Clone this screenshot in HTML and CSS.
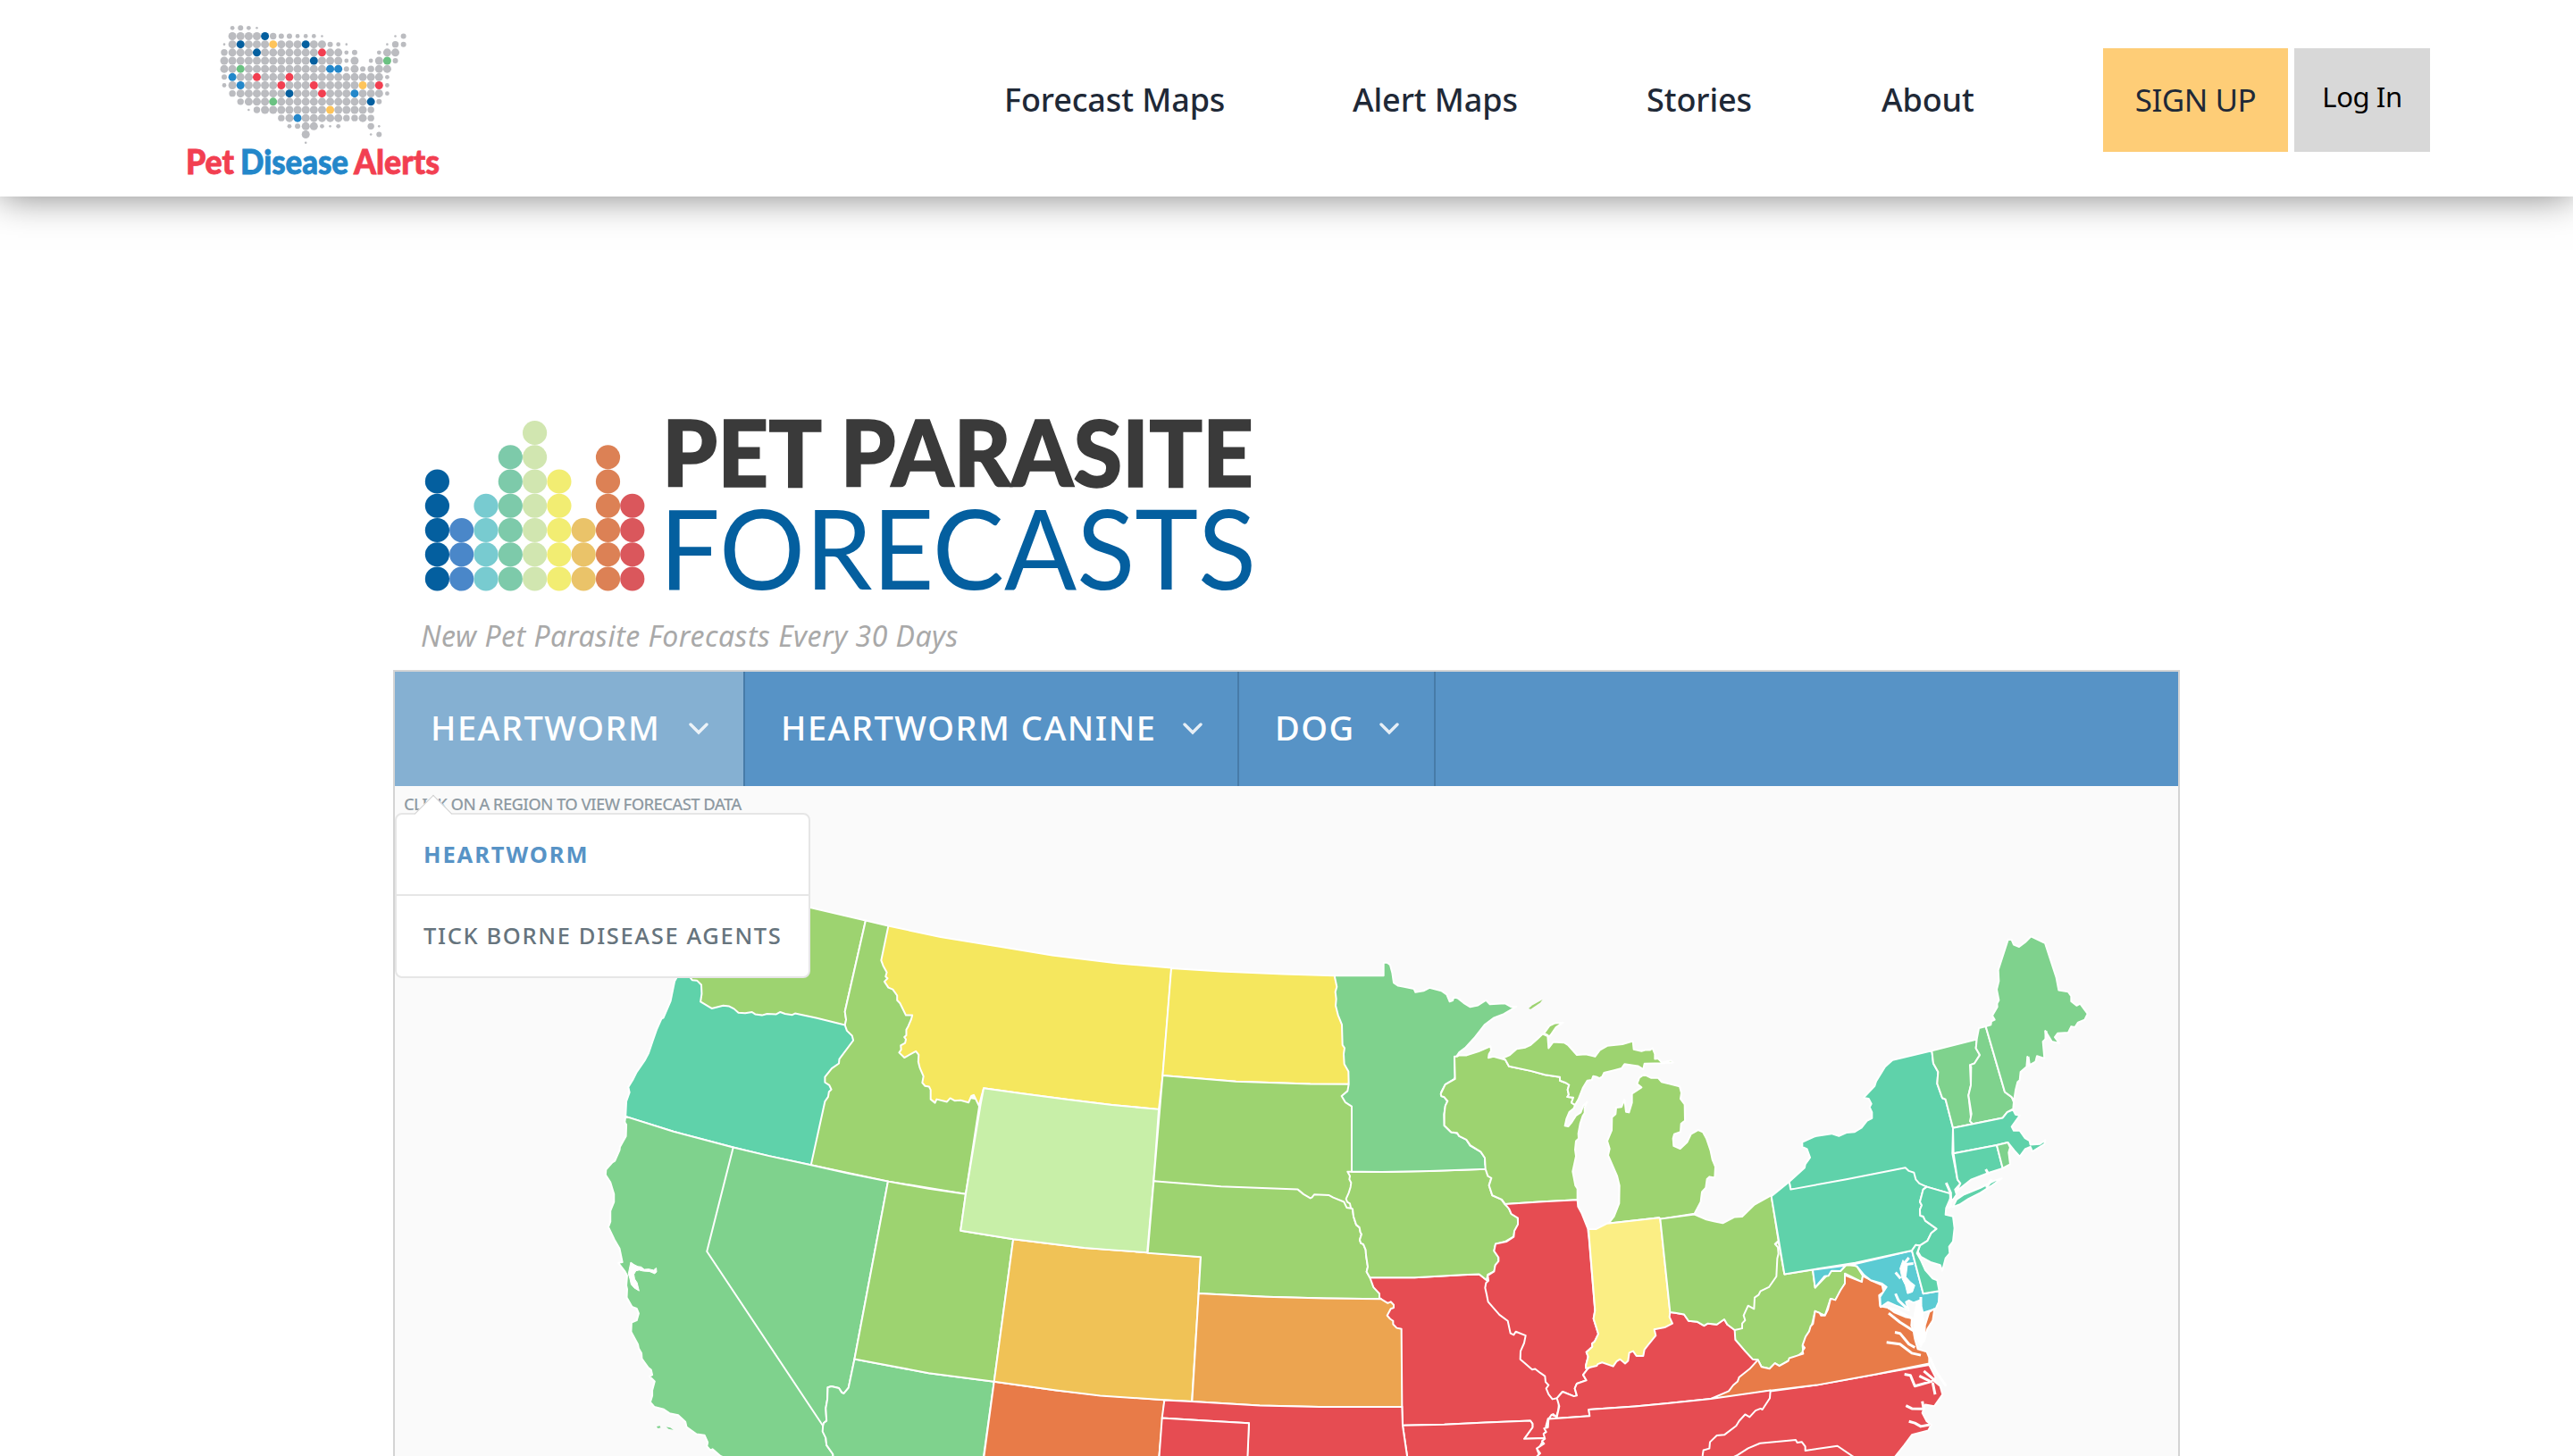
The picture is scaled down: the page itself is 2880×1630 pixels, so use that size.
FILE: index.html
```html
<!DOCTYPE html>
<html lang="en">
<head>
<meta charset="utf-8">
<title>Pet Disease Alerts</title>
<link rel="stylesheet" href="styles.css">
</head>
<body>
<header class="site-header">
  <a class="brand">
    <svg class="brand-logo" viewBox="190 10 320 200" width="320" height="200">
      <g id="usa-dots"></g>
      <g class="brand-name">
        <text x="208" y="195" textLength="54" lengthAdjust="spacingAndGlyphs" class="red">Pet</text>
        <text x="269" y="195" textLength="121" lengthAdjust="spacingAndGlyphs" class="blue">Disease</text>
        <text x="396" y="195" textLength="96" lengthAdjust="spacingAndGlyphs" class="red">Alerts</text>
      </g>
    </svg>
  </a>
  <nav class="main-nav">
    <a class="nav-link forecast">Forecast Maps</a>
    <a class="nav-link alert">Alert Maps</a>
    <a class="nav-link stories">Stories</a>
    <a class="nav-link about">About</a>
    <a class="btn signup">SIGN UP</a>
    <a class="btn login">Log In</a>
  </nav>
</header>

<main class="content">
  <svg class="forecast-logo" viewBox="470 430 960 260" width="960" height="260">
    <g id="bar-dots"></g>
    <text class="title-top" x="741" y="545" textLength="662" lengthAdjust="spacingAndGlyphs">PET PARASITE</text>
    <text class="title-bottom" x="738" y="660" textLength="668" lengthAdjust="spacingAndGlyphs">FORECASTS</text>
  </svg>
  <p class="tagline">New Pet Parasite Forecasts Every 30 Days</p>

  <section class="panel">
    <div class="tabs">
      <a class="tab tab-disease active"><span>HEARTWORM</span><svg class="chev" viewBox="0 0 22 14"><path d="M2 2l9 9 9-9"/></svg></a>
      <a class="tab tab-agent"><span>HEARTWORM CANINE</span><svg class="chev" viewBox="0 0 22 14"><path d="M2 2l9 9 9-9"/></svg></a>
      <a class="tab tab-host"><span>DOG</span><svg class="chev" viewBox="0 0 22 14"><path d="M2 2l9 9 9-9"/></svg></a>
    </div>
    <div class="map-area">
      <p class="hint">CLICK ON A REGION TO VIEW FORECAST DATA</p>
      <svg class="map" viewBox="442 880 1996 750" width="1996" height="750">
        <!-- Pacific and mountain states -->
        <g transform="translate(660 1000) scale(.446429 .401786)">
          <path class="lime" d="M400,0L553,40 692,76 640,330 643,352 640,380 500,400 240,330 230,200Z"/>
          <path class="lime" d="M692,76L749,91 850,300 900,560 980,575 977,592 943,838 750,803 555,757 570,540 640,367 643,352 640,330Z"/>
          <path class="teal" d="M90,622L92,580 100,555 97,540 108,520 118,498 138,466 148,445 158,412 168,380 180,350 185,347 203,300 213,245 218,235 220,215 245,225 257,242 269,243 280,255 281,280 278,302 306,321 335,313 350,315 362,322 373,333 390,334 407,331 415,337 432,340 445,336 468,337 478,331 490,336 508,339 515,335 570,348 640,367 645,383 658,397 661,410 626,462 625,474 607,488 590,512 590,527 601,535 606,547 600,553 598,567 590,580 555,757 450,732 360,708 210,664Z"/>
          <path class="yellow" d="M749,91L731,187 736,202 745,220 742,232 747,237 739,246 749,263 760,268 771,285 771,298 778,306 793,340 809,340 806,352 799,370 794,380 794,396 789,401 793,407 791,417 780,424 781,436 776,444 789,458 818,440 825,450 824,470 828,487 837,510 834,528 841,537 851,539 855,548 855,574 866,584 870,574 896,581 904,571 915,578 930,577 950,583 957,565 963,562 976,592 988,543 1085,558 1200,575 1310,590 1427,602 1437,508 1459,208 1320,195 1160,173 1035,150 880,122Z"/>
          <path class="green" d="M90,622L210,664 360,708 400,998 640,1484 592,1518 594,1538 610,1563 612,1600 400,1600 328,1568 308,1549 303,1552 294,1541 296,1530 288,1510 268,1507 243,1487 240,1473 222,1454 200,1449 186,1438 162,1431 152,1418 157,1400 157,1385 163,1360 150,1346 157,1342 154,1328 147,1322 131,1297 130,1282 123,1268 121,1257 104,1222 105,1196 118,1190 123,1171 118,1157 106,1152 93,1126 94,1103 92,1093 94,1065 88,1053 72,1030 82,1028 75,990 62,965 47,930 52,915 52,885 61,860 61,838 52,805 40,785 41,770 57,750 63,746 75,716 76,707 91,677 92,645 88,638Z"/>
          <path class="water" d="M97,1060L103,1028 112,1035 121,1040 129,1041 137,1048 148,1047 160,1050 167,1044 168,1055 163,1060 150,1054 135,1053 124,1050 116,1052 111,1062 113,1075 119,1085 124,1108 112,1100 104,1090 101,1075Z"/>
          <path class="green islet" d="M168,1486l8-2 2,5-7,2ZM192,1487l10,2 8,6-12-2Z"/>
          <path class="green" d="M360,708L450,732 555,757 650,781 748,803 664,1298 649,1378 637,1394 632,1391 625,1379 606,1374 597,1377 596,1410 592,1435 594,1470 587,1476 585,1484 294,998Z"/>
          <path class="green" d="M664,1298L850,1337 1014,1361 988,1568 985,1600 612,1600 610,1563 594,1538 592,1518 584,1500 585,1484 587,1476 594,1470 592,1435 596,1410 597,1377 606,1374 625,1379 632,1391 637,1394 649,1378Z"/>
          <path class="lime" d="M748,803L850,823 943,838 930,940 1062,964 1014,1361 850,1337 664,1298Z"/>
          <path class="orange-red" d="M1014,1361L1170,1385 1280,1398 1441,1412 1437,1462 1425,1600 985,1600Z"/>
          <path class="gold" d="M1062,964L1240,988 1310,994 1398,1001 1532,1013 1527,1115 1510,1416 1441,1412 1280,1400 1170,1385 1014,1361Z"/>
          <path class="mint" d="M988,543L1085,558 1200,575 1310,590 1427,602 1414,803 1398,1001 1310,994 1240,988 1062,964 930,940 943,838 980,590Z"/>
        </g>
        <!-- Plains states -->
        <g transform="translate(1250 1040) scale(.333333 .376279)">
          <path class="yellow" d="M183,117L350,126 560,134 731,139 800,300 779,462 650,461 400,454 154,436Z"/>
          <path class="lime" d="M154,436L400,454 650,461 779,462 800,500 800,760 800,829 600,850 124,750Z"/>
          <path class="red" d="M850,1037L1000,1037 1160,1029 1217,1027 1248,1049 1400,1190 1480,1380 1485,1410 1483,1430 1476,1452 1465,1443 1465,1455 1448,1457 1441,1480 1445,1495 1436,1500 1440,1515 1368,1517 1396,1483 1396,1472 1389,1463 1240,1468 1100,1474 960,1477 958,1422 900,1190 850,1110 835,1060Z"/>
          <path class="lime" d="M124,750L350,766 608,775 627,789 650,801 656,798 663,790 713,792 727,799 763,812 772,829 786,831 792,833 795,855 804,880 815,888 818,902 822,908 816,925 820,935 828,938 836,955 837,970 843,1005 839,1020 850,1037 862,1066 882,1085 882,1097 888,1101 700,1099 500,1094 275,1084 282,976 104,964Z"/>
          <path class="amber" d="M275,1084L500,1094 700,1099 888,1101 910,1113 920,1109 930,1118 930,1127 920,1130 908,1150 918,1160 928,1166 928,1176 940,1187 956,1190 958,1422 680,1422 480,1418 253,1406Z"/>
          <path class="lime" d="M775,722L890,723 1050,720 1242,714 1246,732 1258,740 1250,762 1261,793 1292,805 1302,818 1316,830 1324,846 1346,858 1348,880 1335,902 1333,915 1305,930 1272,937 1267,957 1281,970 1282,990 1271,1003 1268,1018 1246,1028 1243,1040 1248,1049 1217,1027 1160,1029 1000,1037 850,1037 839,1020 843,1005 837,970 836,955 828,938 820,935 816,925 822,908 818,902 815,888 804,880 795,855 792,833 786,829 783,817 774,812 770,803 779,785 785,768 787,755 781,745 783,735Z"/>
          <path class="green" d="M731,139L896,139 896,100 908,100 918,107 925,130 930,160 945,169 965,172 998,178 1003,188 1030,184 1050,175 1090,184 1108,195 1118,216 1128,213 1132,203 1145,206 1165,220 1187,232 1213,227 1240,212 1253,224 1303,221 1325,232 1342,231 1300,253 1265,265 1235,285 1200,325 1172,352 1150,367 1140,380 1134,380 1136,440 1133,447 1103,463 1089,486 1090,496 1100,500 1110,513 1104,525 1099,552 1100,585 1122,604 1143,608 1150,616 1173,626 1187,645 1222,663 1236,680 1237,700 1242,714 1050,720 890,723 789,722 789,528 768,516 755,497 775,482 779,462 778,424 764,402 762,372 765,354 758,345 756,285 743,256 735,228 737,208 734,187 739,172Z"/>
          <path class="red" d="M960,1477L1100,1474 1240,1468 1389,1463 1396,1472 1396,1483 1368,1517 1437,1515 1420,1540 1412,1550 1420,1568 1400,1600 980,1600 975,1568Z"/>
          <path class="red" d="M160,1402L253,1406 480,1418 680,1422 958,1422 960,1477 975,1568 978,1600 430,1600 438,1568 444,1470 300,1463 152,1455Z"/>
          <path class="red" d="M152,1455L300,1463 444,1470 438,1600 140,1600Z"/>
        </g>
        <!-- Appalachia and the Carolinas, below their neighbours -->
        <g transform="translate(1950 1040) scale(.333333 .376279)">
          <path class="red" d="M628,1297L650,1335 640,1342 665,1360 673,1385 645,1420 615,1415 605,1440 620,1465 635,1475 625,1492 570,1505 545,1535 515,1568 500,1600 -150,1600 -140,1500 0,1400 95,1375 250,1357 450,1325Z"/>
          <path class="lime" d="M142,1027L122,930 60,980 -40,1130 -30,1192 -23,1222 10,1257 35,1280 53,1282 65,1303 92,1308 110,1292 125,1300 160,1282 190,1268 205,1258 203,1240 225,1200 235,1175 245,1137 278,1150 297,1100 313,1104 345,1055 345,1025 402,1050 405,1032 385,1003 352,997 330,1018 300,1017 245,1067 237,1014Z"/>
          <path class="orange-red" d="M53,1282L65,1303 92,1308 110,1292 125,1300 155,1285 158,1277 190,1268 205,1264 203,1255 210,1246 203,1238 213,1213 225,1197 230,1182 238,1175 245,1137 260,1142 265,1150 278,1150 288,1132 297,1100 313,1104 330,1075 345,1055 345,1030 402,1050 405,1032 432,1045 470,1060 475,1080 460,1090 463,1122 490,1127 510,1140 550,1155 570,1158 568,1180 575,1195 580,1220 590,1250 620,1258 628,1275 628,1293 450,1325 250,1357 95,1373 0,1387 -105,1398 -50,1310Z"/>
          <path class="line" d="M-50,1580L-15,1565 20,1545 60,1530 180,1520 185,1528 200,1526 212,1540 212,1552 320,1538 370,1568 390,1580"/>
        </g>
        <!-- Great Lakes and Ohio valley -->
        <g transform="translate(1600 1060) scale(.333333 .363520)">
          <path class="lime" d="M84,338L86,407 53,424 38,453 40,460 50,463 61,475 53,490 50,515 50,550 73,571 93,573 100,583 124,594 137,611 172,631 186,650 188,684 196,706 208,712 200,735 211,765 243,778 254,792 380,785 497,779 497,745 490,735 481,692 492,645 489,625 492,598 501,590 500,575 506,545 515,520 521,512 521,495 530,477 517,488 508,510 492,520 478,540 466,553 455,551 460,530 470,508 485,497 489,487 477,480 483,464 463,462 468,455 464,440 469,425 456,418 438,412 438,401 388,394 340,382 267,368 255,348 215,338 198,342 200,330 207,320 205,306 165,322 125,334 100,334 92,338Z"/>
          <path class="lime" d="M248,342L270,333 293,314 322,310 340,302 362,284 380,268 397,275 400,312 416,293 452,295 465,302 495,333 525,331 556,338 572,318 597,305 648,300 683,290 686,316 712,321 727,317 740,318 749,312 757,330 757,345 768,344 780,356 812,350 818,356 790,358 722,360 718,377 700,367 655,361 645,374 620,380 586,388 580,400 571,405 560,400 550,398 545,410 530,412 515,435 500,470 489,487 477,480 483,464 463,462 468,455 464,440 469,425 456,418 438,412 438,401 388,394 340,382 267,368 255,348Z"/>
          <path class="lime" d="M385,266L403,243 422,235 449,233 425,248 410,268 402,277 397,272Z"/>
          <path class="lime islet" d="M333,190L345,180 380,162 372,172 340,192Z"/>
          <path class="lime" d="M597,852L605,848 620,830 637,790 638,735 630,705 600,642 605,622 597,598 612,565 613,525 625,515 627,495 645,493 655,470 660,508 670,510 680,480 680,452 712,433 697,422 705,403 721,393 745,404 768,404 780,416 805,422 840,430 846,450 843,468 857,485 858,535 845,545 843,570 822,577 818,590 820,613 842,622 865,602 878,577 902,564 918,570 930,590 944,628 950,655 960,677 958,711 940,708 932,715 928,742 915,755 911,785 890,822 775,838 771,834Z"/>
          <path class="red" d="M254,792L380,785 497,779 499,800 512,822 524,850 532,868 536,900 556,1120 551,1145 567,1192 555,1215 546,1222 547,1232 527,1248 533,1262 525,1290 531,1300 516,1318 527,1335 495,1345 488,1360 495,1382 485,1384 447,1370 428,1390 413,1393 400,1378 392,1360 400,1350 390,1340 388,1322 372,1312 355,1300 345,1302 305,1270 306,1245 318,1220 323,1197 290,1185 283,1195 272,1190 263,1152 235,1133 197,1093 192,1070 187,1050 190,1035 198,1028 196,1012 217,1000 221,980 232,968 232,957 217,937 222,915 258,908 283,893 285,875 297,855 297,835 275,823 268,808Z"/>
          <path class="red" d="M808,1125L825,1127 855,1132 870,1152 900,1155 922,1167 935,1160 965,1163 990,1147 1000,1163 1025,1180 1027,1210 1060,1245 1085,1270 1103,1272 1075,1300 1040,1325 1035,1338 1020,1350 1005,1368 945,1392 800,1406 690,1415 535,1425 538,1445 400,1454 410,1441 428,1448 436,1415 428,1390 447,1370 485,1384 495,1382 488,1360 495,1345 527,1335 516,1318 531,1300 620,1240 760,1170Z"/>
          <path class="red" d="M400,1454L538,1445 535,1425 690,1415 800,1406 945,1392 1145,1366 1143,1390 1118,1425 1112,1422 1095,1428 1075,1448 1060,1440 1040,1460 1030,1475 990,1503 965,1505 942,1525 940,1545 920,1550 917,1568 910,1600 360,1600 362,1568 372,1560 360,1545 385,1530 378,1522 388,1515 383,1500 392,1494 385,1483 398,1480Z"/>
          <path class="pale" d="M534,869L560,869 597,852 771,834 775,838 808,1125 806,1140 816,1160 790,1172 755,1178 760,1197 735,1225 722,1240 718,1260 695,1260 684,1245 671,1250 667,1275 657,1283 640,1270 628,1277 617,1292 580,1280 565,1285 562,1290 525,1298 525,1290 533,1262 527,1248 547,1232 546,1222 555,1215 567,1192 551,1145 556,1120Z"/>
          <path class="lime" d="M775,838L890,824 930,840 955,845 985,851 1025,832 1050,831 1090,795 1148,765 1172,905 1160,915 1170,925 1172,945 1168,960 1165,1015 1140,1048 1112,1060 1105,1072 1092,1080 1090,1115 1070,1105 1055,1135 1060,1150 1050,1160 1050,1175 1025,1180 1000,1163 990,1147 965,1163 935,1160 922,1167 900,1155 870,1152 855,1132 825,1127 808,1125Z"/>
        </g>
        <!-- Northeast -->
        <g transform="translate(1950 1040) scale(.333333 .376279)">
          <path class="cyan" d="M237,1014L380,997 570,957 608,1085 662,1077 660,1110 650,1130 607,1142 597,1105 575,1112 560,1105 550,1110 560,1135 515,1120 490,1110 465,1125 463,1095 485,1065 470,1055 432,1045 410,1030 385,1003 352,997 330,1018 300,1017 290,1032 277,1033 245,1067Z"/>
          <path class="teal" d="M158,752L210,710 212,700 228,680 218,655 202,648 202,634 245,617 300,609 325,616 350,606 378,604 400,592 420,570 436,563 436,545 428,530 434,520 425,505 408,502 445,467 450,453 480,410 505,390 637,362 642,400 658,425 655,460 672,503 683,507 708,592 706,668 723,745 733,757 715,775 720,790 705,810 698,787 620,767 560,760 163,775Z"/>
          <path class="teal" d="M98,795L158,752 163,775 350,745 548,710 560,720 577,725 583,745 595,757 620,767 608,775 597,812 603,822 597,835 598,853 608,855 615,868 653,892 635,905 622,928 597,942 583,940 570,957 380,993 142,1027Z"/>
          <path class="teal" d="M620,767L698,787 700,800 685,830 683,850 708,855 713,890 708,930 695,945 697,965 683,980 672,1017 665,1000 635,992 600,975 590,960 597,942 622,928 635,905 653,892 615,868 608,855 598,853 597,835 603,822 597,812 608,775Z"/>
          <path class="teal" d="M570,957L583,940 597,942 587,965 600,985 615,1015 640,1040 655,1045 662,1077 608,1085Z"/>
          <path class="teal" d="M708,827L720,805 745,790 800,770 850,748 872,742 840,762 800,785 760,803 730,820Z"/>
          <path class="green" d="M637,362L788,328 785,355 798,375 780,400 765,405 768,465 760,495 770,575 775,580 708,592 683,507 672,503 655,460 658,425 642,400Z"/>
          <path class="green" d="M788,328L795,295 818,290 882,485 905,500 912,515 910,535 890,545 875,562 775,580 765,572 770,550 760,495 768,465 769,410 765,405 780,400 798,375 785,355Z"/>
          <path class="green" d="M818,290L835,285 837,275 848,270 840,258 857,232 856,222 862,212 855,180 862,155 860,122 893,32 905,32 912,47 930,53 950,40 970,22 1017,42 1055,145 1063,182 1095,187 1105,200 1105,215 1123,228 1135,222 1160,252 1150,270 1128,278 1118,292 1105,290 1095,308 1060,310 1050,322 1065,340 1040,335 1018,303 1022,325 1010,335 1015,385 990,378 985,395 965,405 958,380 955,410 935,425 932,450 925,455 918,480 913,510 905,500 882,485Z"/>
          <path class="teal" d="M708,592L775,580 875,562 890,545 910,538 918,552 932,555 905,588 912,600 932,600 950,622 965,630 968,642 1000,640 1018,628 1015,640 975,662 968,648 950,655 932,677 915,660 892,635 855,643 710,668Z"/>
          <path class="teal" d="M710,668L855,643 875,712 830,725 770,745 720,780 733,757 723,745Z"/>
          <path class="green" d="M855,643L892,635 900,650 895,665 900,700 875,712Z"/>
          <path class="orange-red" d="M646,1130L640,1165 622,1190 612,1225 614,1180 628,1140Z"/>
          <!-- bays, river mouths and sounds -->
          <path class="water" d="M540,985L530,1010 537,1040 548,1060 555,1085 572,1080 580,1060 565,1050 550,1035 555,1000ZM585,1110L575,1160 580,1210 600,1245 612,1225 612,1170 606,1140 597,1105Z"/>
          <path class="inlet" d="M560,978L540,1000M515,1022L532,1040M575,995L550,998M515,1085L525,1105 555,1130M490,1127L515,1133 570,1158M492,1143L530,1170 575,1195M513,1200L530,1203 560,1235 580,1245M485,1230L530,1235 570,1262 600,1268M600,1095L600,1120M685,755L700,785 700,825 690,830M818,715L828,730M820,770L838,745M545,1325L565,1328 580,1360 640,1345M595,1330L630,1345M610,1315L650,1345M640,1350L648,1385M550,1418L570,1427 610,1428M605,1405L610,1430M560,1465L580,1470 600,1480 630,1475M1020,303L1020,330M960,380L965,410M630,1275L650,1315 685,1360"/>
        </g>
      </svg>
      <div class="dropdown">
        <a class="option selected">HEARTWORM</a>
        <a class="option">TICK BORNE DISEASE AGENTS</a>
      </div>
    </div>
  </section>
</main>
<script src="dots.js"></script>
</body>
</html>
```
FILE: styles.css
```css
* { box-sizing: border-box; }
html { height: 1630px; overflow: hidden; }
body {
  display: flow-root;
  margin: 0;
  height: 1630px;
  overflow: hidden;
  background: #fff;
  font-family: "Noto Sans", "Open Sans", sans-serif;
}
p { margin: 0; }
.site-header {
  height: 220px;
  display: flex;
  justify-content: space-between;
  padding: 10px 160px 0 190px;
  background: #fff;
  box-shadow: 0 0 40px rgba(0, 0, 0, .5);
}
.brand-logo { display: block; }
.brand-name text { font: 900 37px Lato, sans-serif; stroke-width: .8; }
.brand-name .red { fill: #f23f51; stroke: #f23f51; }
.brand-name .blue { fill: #2387ca; stroke: #2387ca; }
.main-nav {
  display: flex;
  height: 116px;
  margin-top: 44px;
  white-space: nowrap;
  color: #1f2937;
}
.nav-link {
  font-size: 36px;
  font-weight: 500;
  line-height: 116px;
  letter-spacing: -.1px;
}
.forecast { width: 390px; }
.alert { width: 329px; }
.stories { width: 263px; }
.about { width: 248px; }
.btn { line-height: 116px; text-align: center; }
.signup { width: 207px; margin-right: 7px; background: #fecd77; font-size: 35px; letter-spacing: -.5px; }
.login { width: 152px; background: #d8d8d8; color: #000; font-size: 31px; line-height: 108px; letter-spacing: -.4px; }

.content {
  width: 2000px;
  height: 1200px;
  margin: 210px auto 0;
  overflow: hidden;
}
.forecast-logo { display: block; margin-left: 30px; }
.title-top { font: 900 103px Lato, sans-serif; fill: #3a3a3a; stroke: #3a3a3a; stroke-width: 1.5; }
.title-bottom { font: 400 125px Lato, sans-serif; fill: #045f9f; }
.tagline {
  height: 60px;
  padding: 0 0 12px 31px;
  color: #a9a9a9;
  font-size: 32px;
  font-style: italic;
  line-height: 44px;
  letter-spacing: .5px;
  white-space: nowrap;
}
.panel {
  border: 2px solid #d4d4d4;
  border-bottom: 0;
  background: #fafafa;
}
.tabs { display: flex; height: 128px; background: #5793c6; }
.tab {
  display: flex;
  align-items: center;
  justify-content: space-between;
  padding: 0 39px 0 40px;
  border-right: 2px solid #477ba8;
  color: #fff;
  font-size: 38px;
  font-weight: 500;
  letter-spacing: 1.5px;
  line-height: 60px;
  white-space: nowrap;
}
.tab span { padding-bottom: 4px; }
.tab.active { background: #85b0d2; }
.tab-disease { width: 392px; }
.tab-agent { width: 553px; }
.tab-host { width: 220px; }
.chev { width: 22px; height: 14px; fill: none; stroke: #fff; stroke-width: 3.4; stroke-linecap: round; opacity: .85; }

.map-area { position: relative; height: 750px; }
.hint {
  position: absolute;
  left: 10px;
  top: 7px;
  color: #8f9ba3;
  font-size: 18.5px;
  font-weight: 500;
  line-height: 26px;
  letter-spacing: -.65px;
  white-space: nowrap;
}
.map { display: block; }
.map path { stroke: #fff; stroke-width: 2; stroke-linejoin: round; vector-effect: non-scaling-stroke; }
.map .lime { fill: #9dd370; }
.map .green { fill: #7fd28d; }
.map .teal { fill: #5fd2aa; }
.map .yellow { fill: #f5e75e; }
.map .pale { fill: #fbee84; }
.map .mint { fill: #c8efa8; }
.map .gold { fill: #f0c256; }
.map .amber { fill: #eca450; }
.map .orange-red { fill: #e87b48; }
.map .red { fill: #e64c52; }
.map .cyan { fill: #5bcbd3; }
.map .water { fill: #fff; stroke-width: 1; }
.map .line { fill: none; }
.map .inlet { fill: none; stroke-width: 3; }
.map .islet { stroke: none; }

.dropdown {
  position: absolute;
  left: 0;
  top: 30px;
  width: 465px;
  border: 2px solid #e6e6e6;
  border-radius: 8px;
  background: #fff;
}
.dropdown::before {
  content: "";
  position: absolute;
  left: 26px;
  top: -16px;
  width: 29px;
  height: 29px;
  border: solid #d0d0d0;
  border-width: 1px 0 0 1px;
  background: #fff;
  transform: rotate(45deg);
}
.option {
  position: relative;
  display: block;
  height: 89px;
  padding-left: 30px;
  color: #66747d;
  font-size: 25.5px;
  font-weight: 500;
  letter-spacing: 1.65px;
  line-height: 88px;
  white-space: nowrap;
}
.option + .option { height: 92px; border-top: 2px solid #e6e6e6; }
.option.selected { color: #5793c6; font-weight: 700; letter-spacing: 1.9px; }
```
FILE: dots.js
```js
const NS = "http://www.w3.org/2000/svg";
function dot(parent, cx, cy, r, fill) {
  const c = document.createElementNS(NS, "circle");
  c.setAttribute("cx", cx);
  c.setAttribute("cy", cy);
  c.setAttribute("r", r);
  c.setAttribute("fill", fill);
  parent.appendChild(c);
}

// Digits are grey dots by size, letters are coloured dots.
const usa = [
  ".2321..................",
  ".5555N4332221........13",
  "15N555Y555N55321....143",
  "4555N5555555R5523..255.",
  "55555555555N55525.25G3.",
  "55G5555555555BB353455..",
  "3B55R555R555555555552..",
  "25B5555R555R55555Y5R2..",
  ".4555555N555R555B5552..",
  "..4555G55555555555N3...",
  "...1455555555Y55554....",
  ".......45B555554454....",
  "........2355212...41...",
  "..........5.......13...",
  "..........1............"
];
const radii = { 1: 1.3, 2: 2.4, 3: 3, 4: 3.7, 5: 4.5 };
const tints = { N: "#045f9f", B: "#2387ca", R: "#f23f51", G: "#6bc282", Y: "#fec45a" };
const map = document.getElementById("usa-dots");
usa.forEach((row, r) => [...row].forEach((ch, i) => {
  if (ch !== ".") dot(map, 251 + i * 9.12, 31.3 + r * 9.17, radii[ch] || 4.5, tints[ch] || "#bbbcc0");
}));

const bars = [[5, "#045f9f"], [3, "#4a87c9"], [4, "#78cbd0"], [6, "#7dcaaa"], [7, "#d1e6b0"],
  [5, "#f2ed72"], [3, "#eac369"], [6, "#dc8155"], [4, "#da575c"]];
const chart = document.getElementById("bar-dots");
bars.forEach(([n, fill], i) => {
  for (let k = 0; k < n; k++) dot(chart, 489.4 + i * 27.3, 648 - k * 27.25, 13.6, fill);
});
```
